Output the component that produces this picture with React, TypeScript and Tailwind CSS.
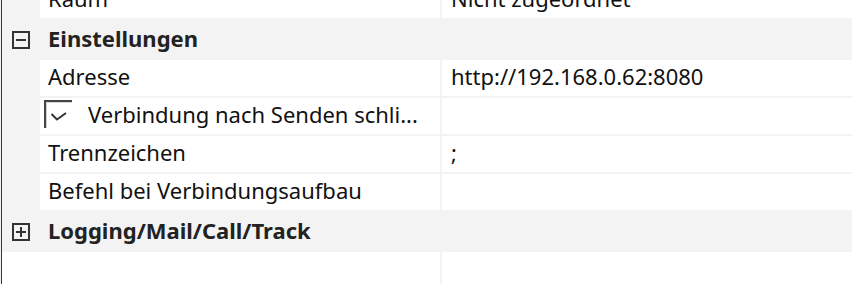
import React from 'react';

const font = { fontFamily: '"Noto Sans", "Open Sans", sans-serif' };

function ExpandBox({ open }: { open: boolean }) {
  return (
    <svg width="18" height="18" viewBox="0 0 18 18" className="shrink-0">
      <rect x="1" y="1" width="16" height="16" fill="none" stroke="#333" strokeWidth="2" />
      <path d="M4 9h10" stroke="#333" strokeWidth="2" />
      {!open && <path d="M9 4v10" stroke="#333" strokeWidth="2" />}
    </svg>
  );
}

function Category({ label, open }: { label: string; open: boolean }) {
  return (
    <div className="flex h-[40px] items-center bg-[#f3f3f3]">
      <div className="flex w-[38px] shrink-0 pl-[10px]">
        <ExpandBox open={open} />
      </div>
      <div className="pb-[4px] pl-[8px] text-[22px] font-bold text-[#222]">{label}</div>
    </div>
  );
}

function Prop({ name, value, children }: { name?: string; value?: string; children?: React.ReactNode }) {
  return (
    <div className="flex h-[38px] items-start gap-[2px] bg-[#f3f3f3]">
      <div className="w-[36px] shrink-0" />
      <div className="flex h-[36px] w-[400px] shrink-0 items-center bg-white pb-[4px] pl-[8px] text-[22px] text-[#111]">
        {children ?? name}
      </div>
      <div className="flex h-[36px] flex-1 items-center bg-white pb-[4px] pl-[9px] text-[22px] text-[#111]">{value}</div>
    </div>
  );
}

function Checkbox() {
  return (
    <div className="h-[28px] w-[28px] shrink-0 border-l-2 border-t-2 border-[#444]">
      <div className="h-full w-full border-l border-t border-[#d4d4d4]">
        <svg width="25" height="25" viewBox="0 0 25 25">
          <path d="M4.5 11l5.5 5.5 9-6.5" fill="none" stroke="#333" strokeWidth="2" />
        </svg>
      </div>
    </div>
  );
}

export default function App() {
  return (
    <div className="h-[284px] w-[852px] overflow-hidden bg-white" style={font}>
      <div className="h-full border-l border-[#f0f0f0]">
        <div className="flex h-full flex-col border-l border-[#3a3a3a]">
          <div className="-mt-[18px]">
            <Prop name="Raum" value="Nicht zugeordnet" />
            <Category label="Einstellungen" open />
            <Prop name="Adresse" value="http://192.168.0.62:8080" />
            <Prop>
              <div className="-ml-[4px] flex items-center gap-[16px]">
                <Checkbox />
                <span>Verbindung nach Senden schli...</span>
              </div>
            </Prop>
            <Prop name="Trennzeichen" value=";" />
            <Prop name="Befehl bei Verbindungsaufbau" value="" />
            <Category label="Logging/Mail/Call/Track" open={false} />
          </div>
          <div className="flex flex-1">
            <div className="w-[438px] shrink-0 bg-white" />
            <div className="w-[2px] shrink-0 bg-[#f3f3f3]" />
            <div className="flex-1 bg-white" />
          </div>
        </div>
      </div>
    </div>
  );
}
